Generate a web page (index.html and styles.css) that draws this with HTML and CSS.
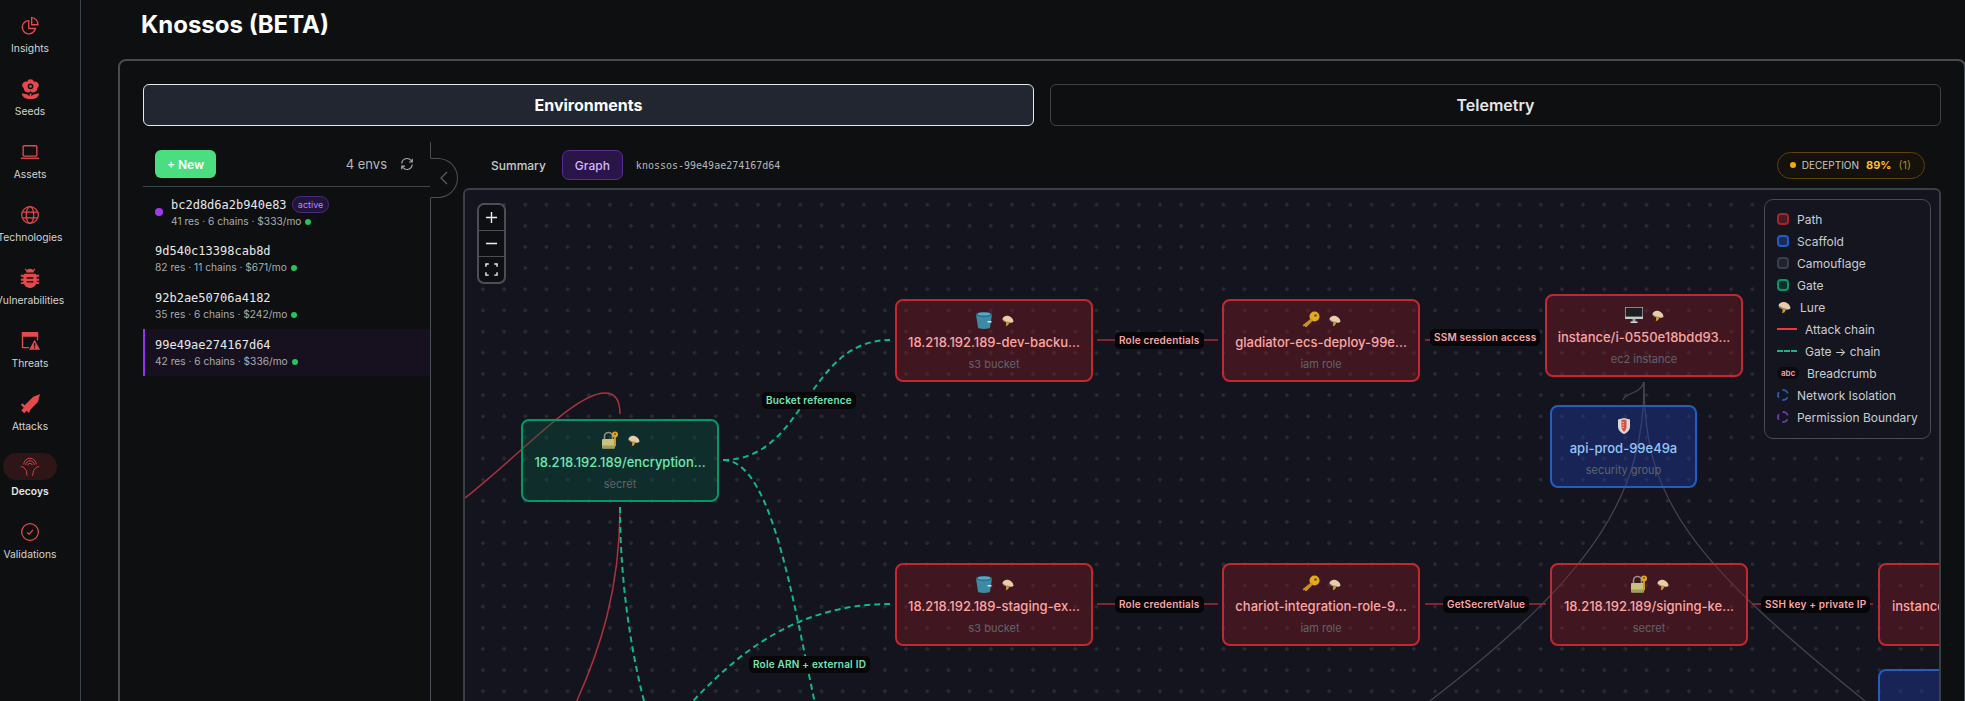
FILE: index.html
```html
<!DOCTYPE html>
<html lang="en">
<head>
    <meta charset="UTF-8">
    <meta name="viewport" content="width=device-width, initial-scale=1.0">
    <title>Knossos (BETA)</title>
    <link rel="stylesheet" href="styles.css">
</head>
<body>

<svg class="defs" width="0" height="0" aria-hidden="true">
    <symbol id="e-lure" viewBox="0 0 14 14">
        <path d="M1.500 5.500C2 3 5 1.500 7.500 2c3 .5 5.500 3 6 6-.2 1-2 1.500-4 1.500-3 0-7-.8-8-4z" fill="#e8cdaa"/>
        <path d="M2 6.500c1.500 1.500 4 2.500 7.500 2.800" fill="none" stroke="#8b7a68" stroke-width="1.200"/>
        <path d="M5.500 9l3.500 .5-1.500 2.700-2.500 1 .5-1.700z" fill="#dd9d1c"/>
    </symbol>
    <symbol id="e-lock" viewBox="0 0 18 18">
        <path d="M3.500 8V5.500a4 4 0 0 1 8 0V8" fill="none" stroke="#8f8f88" stroke-width="1.600"/>
        <rect x="1" y="8" width="13" height="9.500" rx="1" fill="#c9c27c"/>
        <rect x="1" y="14.500" width="13" height="3" rx="1" fill="#a09a5c"/>
        <circle cx="14" cy="3.500" r="3" fill="#e0a526"/>
        <circle cx="14" cy="3" r=".9" fill="#6b4c10"/>
        <path d="M13 6h2v8.500l-1 1.200-1-1.200z" fill="#d2951e"/>
    </symbol>
    <symbol id="e-bucket" viewBox="0 0 18 18">
        <path d="M1 3.500h16l-2 13c-.3 1-2.800 1.400-6 1.400s-5.700-.4-6-1.400z" fill="#3d8aa6"/>
        <ellipse cx="9" cy="3.500" rx="8" ry="2.500" fill="#2c6a82"/>
        <ellipse cx="9" cy="3" rx="6.500" ry="1.600" fill="#59a8c4"/>
        <rect x="12.500" y="10" width="4" height="1.500" fill="#cfe3ea"/>
    </symbol>
    <symbol id="e-key" viewBox="0 0 18 18">
        <circle cx="12.500" cy="5.500" r="5" fill="#e3ab1f"/>
        <circle cx="13.500" cy="4.500" r="1.300" fill="#6e4e0a"/>
        <path d="M9 7.500l2 2L4.500 16l-1 .3-.7-1.300-1.500 .5L.8 14z" fill="#c9921a"/>
    </symbol>
    <symbol id="e-monitor" viewBox="1 1 18 16">
        <rect x="1" y="1" width="18" height="12" fill="#c6c9cc"/>
        <rect x="1.600" y="1.600" width="16.800" height="9" fill="#1d1e21"/>
        <rect x="8.500" y="13" width="3" height="3" fill="#9a9da1"/>
        <rect x="6.500" y="15.500" width="7" height="1.500" fill="#d6d8da"/>
    </symbol>
    <symbol id="e-shield" viewBox="0 0 14 18">
        <path d="M7 1l6 1.500v7c0 3.500-3 6.500-6 7.500-3-1-6-4-6-7.500v-7z" fill="#d9d9d6"/>
        <path d="M7 2.500l2.500 .6v7c0 2-1.300 3.800-2.500 4.900-1.200-1.100-2.500-2.900-2.500-4.900v-7z" fill="#d8503f"/>
        <path d="M5.500 5.500h1.200M5.500 8h1.200M5.500 10.500h1.200" stroke="#f2ded8" stroke-width="1"/>
    </symbol>
</svg>

<aside class="sidebar">
    <a class="nav-item">
        <span class="nav-icon">
            <svg viewBox="0 0 24 24" fill="none" stroke="currentColor" stroke-width="1.600"><path d="M10.500 5.500a8 8 0 1 0 8 9.500h-8z"/><path d="M14 2.500a8 8 0 0 1 7.500 8.500H14z" transform="translate(0 -.5)"/></svg>
        </span>
        <span class="nav-label">Insights</span>
    </a>
    <a class="nav-item">
        <span class="nav-icon">
            <svg class="tall" viewBox="0 0 24 24" fill="currentColor"><path d="M12 1a4.200 4.200 0 0 1 4 2.700 4.400 4.400 0 0 1 4.800 1.800 4.200 4.200 0 0 1-1.200 5.600 4.300 4.300 0 0 1-4 4.900 4.300 4.300 0 0 1-3.600-1.400 4.300 4.300 0 0 1-3.600 1.400 4.300 4.300 0 0 1-4-4.900A4.200 4.200 0 0 1 3.200 5.500 4.400 4.400 0 0 1 8 3.700 4.200 4.200 0 0 1 12 1z"/><circle cx="12" cy="9" r="3.200" fill="#0e0f10"/><circle cx="12" cy="9" r="1.500"/><path d="M2 17c4 0 8 1.200 9 3.500V17h2v3.500c1-2.300 5-3.500 9-3.500-.5 4-4 6.500-10 6.500S2.500 21 2 17z"/></svg>
        </span>
        <span class="nav-label">Seeds</span>
    </a>
    <a class="nav-item">
        <span class="nav-icon">
            <svg viewBox="0 0 24 24" fill="none" stroke="currentColor" stroke-width="1.600"><rect x="3.800" y="4.500" width="16.400" height="12.500" rx="1"/><path d="M1 19.500h22"/></svg>
        </span>
        <span class="nav-label">Assets</span>
    </a>
    <a class="nav-item">
        <span class="nav-icon">
            <svg viewBox="0 0 24 24" fill="none" stroke="currentColor" stroke-width="1.500"><circle cx="12" cy="12" r="10"/><ellipse cx="12" cy="12" rx="4.500" ry="10"/><path d="M2.800 8.500h18.400M2.800 15.500h18.400"/></svg>
        </span>
        <span class="nav-label">Technologies</span>
    </a>
    <a class="nav-item">
        <span class="nav-icon">
            <svg viewBox="0 0 24 24" fill="currentColor"><path d="M7.500 5.500a4.500 4.500 0 0 1 9 0z"/><path d="M6 1l3 3M18 1l-3 3" stroke="currentColor" stroke-width="1.500"/><path d="M6 7h12a2 2 0 0 1 1.500 1.200H23v2.300h-3V13h3v2.300h-3V17h3v2.300h-3.800A7.500 7.500 0 0 1 12 24a7.500 7.500 0 0 1-7.200-4.700H1V17h3v-1.700H1V13h3v-2.500H1V8.200h3.500A2 2 0 0 1 6 7z"/><path d="M8 12h8M8 16.500h8" stroke="#0e0f10" stroke-width="2"/></svg>
        </span>
        <span class="nav-label">Vulnerabilities</span>
    </a>
    <a class="nav-item">
        <span class="nav-icon">
            <svg viewBox="0 0 24 24" fill="none" stroke="currentColor" stroke-width="1.600"><path d="M11 20H3V2.500h18V11"/><path d="M3 2h18v4H3z" fill="currentColor"/><path d="M17.500 10.500 24 22.500H11z" fill="currentColor" stroke="none"/><path d="M17.500 14.500v4M17.500 19.500v1.500" stroke="#0e0f10" stroke-width="1.500"/></svg>
        </span>
        <span class="nav-label">Threats</span>
    </a>
    <a class="nav-item">
        <span class="nav-icon">
            <svg viewBox="0 0 24 24" fill="currentColor"><path d="M24 0 21.500 9.500 11 20 5 14 15.500 3.500z"/><path d="M3.500 11.500l9.500 9.500-2 2-2.500-2.500-3 3L2 20l3-3-3.500-3.500z" transform="translate(-.5 -.5)"/></svg>
        </span>
        <span class="nav-label">Attacks</span>
    </a>
    <a class="nav-item active">
        <span class="nav-icon">
            <svg viewBox="0 0 24 24" fill="none" stroke="currentColor" stroke-width="1.200"><path d="M4.500 9a7.500 7.500 0 0 1 15 0"/><path d="M7 9.500a5 5 0 0 1 10 0"/><path d="M9.500 10a2.500 2.500 0 0 1 5 0"/><path d="M1 11.500l3 .5 3.500 4 1 6.500M23 11.500l-3 .5-3.500 4-1.500 6.500"/></svg>
        </span>
        <span class="nav-label">Decoys</span>
    </a>
    <a class="nav-item">
        <span class="nav-icon">
            <svg viewBox="0 0 24 24" fill="none" stroke="currentColor" stroke-width="1.500"><circle cx="12" cy="12" r="10"/><path d="M8.500 12.500l2.500 2 4.500-5"/></svg>
        </span>
        <span class="nav-label">Validations</span>
    </a>
</aside>

<main class="main">
    <h1 class="page-title">Knossos (BETA)</h1>

    <section class="panel">
        <div class="tabs">
            <button class="tab active">Environments</button>
            <button class="tab">Telemetry</button>
        </div>

        <div class="workspace">
            <div class="env-list">
                <div class="env-head">
                    <button class="btn-new">+ New</button>
                    <span class="env-count">4 envs</span>
                    <svg class="refresh" viewBox="0 0 24 24" fill="none" stroke="currentColor" stroke-width="2"><path d="M3 11a9 9 0 0 1 16-5l2 2.500M21 3v5.500h-5.500M21 13a9 9 0 0 1-16 5l-2-2.500M3 21v-5.500h5.500"/></svg>
                </div>
                <div class="env-row current">
                    <span class="env-dot"></span>
                    <div>
                        <div class="env-name">bc2d8d6a2b940e83 <span class="badge-active">active</span></div>
                        <div class="env-meta">41 res · 6 chains · $333/mo <span class="ok-dot"></span></div>
                    </div>
                </div>
                <div class="env-row">
                    <div>
                        <div class="env-name">9d540c13398cab8d</div>
                        <div class="env-meta">82 res · 11 chains · $671/mo <span class="ok-dot"></span></div>
                    </div>
                </div>
                <div class="env-row">
                    <div>
                        <div class="env-name">92b2ae50706a4182</div>
                        <div class="env-meta">35 res · 6 chains · $242/mo <span class="ok-dot"></span></div>
                    </div>
                </div>
                <div class="env-row selected">
                    <div>
                        <div class="env-name">99e49ae274167d64</div>
                        <div class="env-meta">42 res · 6 chains · $336/mo <span class="ok-dot"></span></div>
                    </div>
                </div>
                <div class="collapse">
                    <svg viewBox="0 0 8 14" fill="none" stroke="currentColor" stroke-width="1.200"><path d="M7 1 1 7l6 6"/></svg>
                </div>
            </div>

            <div class="graph-col">
                <div class="graph-head">
                    <button class="view-btn">Summary</button>
                    <button class="view-btn active">Graph</button>
                    <span class="stack-id">knossos-99e49ae274167d64</span>
                    <div class="deception">
                        <span class="dec-dot"></span>
                        <span class="dec-word">DECEPTION</span>
                        <b class="dec-pct">89%</b>
                        <span class="dec-count">(1)</span>
                    </div>
                </div>

                <div class="canvas">
                    <!-- viewBox uses page coordinates, easier to line up with the nodes -->
                    <svg class="edges" viewBox="465 190 1474 511" fill="none">
                        <g class="edge-gray">
                            <path d="M1644 382C1640 395 1625 392 1623 400"/>
                            <path d="M1644 382C1644 490 1600 570 1430 701"/>
                            <path d="M1644 382C1644 500 1690 560 1870 705"/>
                        </g>
                        <g class="edge-red-thin">
                            <path d="M620 414C620 400 615 393 605 393C575 393 520 455 465 498"/>
                            <path d="M620 507C620 590 600 650 575 705"/>
                        </g>
                        <g class="edge-green">
                            <path d="M723 460C806 460 806 340 890 340"/>
                            <path d="M723 460C807 460 807 870 891 870"/>
                            <path d="M620 507C620 570 628 640 645 705"/>
                            <path d="M680 715C730 660 790 604 890 604"/>
                        </g>
                        <g class="edge-red">
                            <path d="M1097 340H1218"/>
                            <path d="M1425 340C1482 340 1482 336 1540 336"/>
                            <path d="M1097 604H1218"/>
                            <path d="M1425 604H1546"/>
                            <path d="M1752 604H1873"/>
                        </g>
                    </svg>

                    <div class="zoom-ctl">
                        <button><svg viewBox="0 0 14 14" stroke="currentColor" stroke-width="1.500"><path d="M7 1v12M1 7h12"/></svg></button>
                        <button><svg viewBox="0 0 14 14" stroke="currentColor" stroke-width="1.500"><path d="M1 7h12"/></svg></button>
                        <button><svg viewBox="0 0 14 14" fill="none" stroke="currentColor" stroke-width="1.500"><path d="M1 4V1h3M10 1h3v3M13 10v3h-3M4 13H1v-3"/></svg></button>
                    </div>

                    <div class="node gate n-encrypt">
                        <div class="node-icons"><svg class="ico"><use href="#e-lock"/></svg><svg class="ico-lure"><use href="#e-lure"/></svg></div>
                        <div class="node-name">18.218.192.189/encryption...</div>
                        <div class="node-type">secret</div>
                    </div>
                    <div class="node path n-backup">
                        <div class="node-icons"><svg class="ico"><use href="#e-bucket"/></svg><svg class="ico-lure"><use href="#e-lure"/></svg></div>
                        <div class="node-name">18.218.192.189-dev-backu...</div>
                        <div class="node-type">s3 bucket</div>
                    </div>
                    <div class="node path n-gladiator">
                        <div class="node-icons"><svg class="ico"><use href="#e-key"/></svg><svg class="ico-lure"><use href="#e-lure"/></svg></div>
                        <div class="node-name">gladiator-ecs-deploy-99e...</div>
                        <div class="node-type">iam role</div>
                    </div>
                    <div class="node path n-instance">
                        <div class="node-icons"><svg class="ico"><use href="#e-monitor"/></svg><svg class="ico-lure"><use href="#e-lure"/></svg></div>
                        <div class="node-name">instance/i-0550e18bdd93...</div>
                        <div class="node-type">ec2 instance</div>
                    </div>
                    <div class="node scaffold n-api">
                        <div class="node-icons"><svg class="ico"><use href="#e-shield"/></svg></div>
                        <div class="node-name">api-prod-99e49a</div>
                        <div class="node-type">security group</div>
                    </div>
                    <div class="node path n-staging">
                        <div class="node-icons"><svg class="ico"><use href="#e-bucket"/></svg><svg class="ico-lure"><use href="#e-lure"/></svg></div>
                        <div class="node-name">18.218.192.189-staging-ex...</div>
                        <div class="node-type">s3 bucket</div>
                    </div>
                    <div class="node path n-chariot">
                        <div class="node-icons"><svg class="ico"><use href="#e-key"/></svg><svg class="ico-lure"><use href="#e-lure"/></svg></div>
                        <div class="node-name">chariot-integration-role-9...</div>
                        <div class="node-type">iam role</div>
                    </div>
                    <div class="node path n-signing">
                        <div class="node-icons"><svg class="ico"><use href="#e-lock"/></svg><svg class="ico-lure"><use href="#e-lure"/></svg></div>
                        <div class="node-name">18.218.192.189/signing-ke...</div>
                        <div class="node-type">secret</div>
                    </div>
                    <div class="node path n-instance2">
                        <div class="node-name n-cut">instance</div>
                    </div>
                    <div class="node scaffold n-api2"></div>

                    <span class="edge-label green l-bucket">Bucket reference</span>
                    <span class="edge-label green l-arn">Role ARN + external ID</span>
                    <span class="edge-label red l-role1">Role credentials</span>
                    <span class="edge-label red l-ssm">SSM session access</span>
                    <span class="edge-label red l-role2">Role credentials</span>
                    <span class="edge-label red l-secret">GetSecretValue</span>
                    <span class="edge-label red l-ssh">SSH key + private IP</span>

                    <div class="legend">
                        <div class="legend-row"><span class="sw sw-path"></span>Path</div>
                        <div class="legend-row"><span class="sw sw-scaffold"></span>Scaffold</div>
                        <div class="legend-row"><span class="sw sw-camo"></span>Camouflage</div>
                        <div class="legend-row"><span class="sw sw-gate"></span>Gate</div>
                        <div class="legend-row wide"><svg class="sw-lure"><use href="#e-lure"/></svg>Lure</div>
                        <div class="legend-row wider"><span class="ln ln-attack"></span>Attack chain</div>
                        <div class="legend-row wider"><span class="ln ln-gate"></span>Gate → chain</div>
                        <div class="legend-row wider"><span class="sw-abc">abc</span>Breadcrumb</div>
                        <div class="legend-row"><span class="sw-ring ring-net"></span>Network Isolation</div>
                        <div class="legend-row"><span class="sw-ring ring-perm"></span>Permission Boundary</div>
                    </div>
                </div>
            </div>
        </div>
    </section>
</main>

</body>
</html>
```

FILE: styles.css
```css
* {
    box-sizing: border-box;
}

html, body {
    height: 100%;
    overflow: hidden;
}

body {
    margin: 0;
    display: flex;
    background: #0e0f10;
    color: #e5e7eb;
    font-family: Inter, "Liberation Sans", sans-serif;
}

button {
    font-family: inherit;
    cursor: pointer;
}

.defs {
    position: absolute;
}

/* sidebar */
.sidebar {
    width: 81px;
    flex: none;
    padding-top: 12px;
    border-right: 1px solid #3d444b;
}

.nav-item {
    width: 60px;
    height: 63px;
    display: flex;
    flex-direction: column;
    align-items: center;
    color: #e5484d;
}

.nav-icon {
    height: 27px;
    display: flex;
    align-items: center;
    justify-content: center;
    flex: none;
}

.nav-icon svg {
    width: 20px;
    height: 20px;
    flex: none;
}

.nav-icon svg.tall {
    width: 21px;
    height: 24px;
}

.nav-label {
    margin-top: 2px;
    font-size: 10.300px;
    line-height: 14px;
    color: #d4d4d4;
    white-space: nowrap;
}

.nav-item.active {
    height: 65px;
}

.nav-item.active .nav-icon {
    width: 54px;
    border-radius: 14px;
    background: #2d1518;
}

.nav-item.active .nav-icon svg {
    color: #c9424a;
}

.nav-item.active .nav-label {
    margin-top: 4px;
    font-weight: 600;
    color: #e5e5e5;
}

/* main */
.main {
    flex: 1;
    min-width: 0;
    padding-left: 37px;
}

.page-title {
    margin: 9px 0 18px;
    padding-left: 23px;
    font-size: 24px;
    line-height: 32px;
    font-weight: 700;
    color: #fff;
}

.panel {
    width: 1848px;
    height: 700px;
    padding: 23px;
    border: 2px solid #464c52;
    border-radius: 8px;
}

.tabs {
    display: grid;
    grid-template-columns: 1fr 1fr;
    gap: 16px;
}

.tab {
    height: 42px;
    background: transparent;
    border: 1px solid #3d4349;
    border-radius: 6px;
    color: #e5e7eb;
    font-size: 16px;
    font-weight: 600;
}

.tab.active {
    background: #212630;
    border-color: #e8e8e8;
    color: #fff;
    font-weight: 700;
}

.workspace {
    display: flex;
    margin-top: 16px;
    height: 600px;
}

/* env list */
.env-list {
    position: relative;
    width: 288px;
    flex: none;
    border-right: 1px solid #4a5056;
}

.env-head {
    height: 45px;
    margin-bottom: 1px;
    display: flex;
    align-items: center;
    padding: 0 16px 0 12px;
    border-bottom: 1px solid #3f464b;
}

.btn-new {
    height: 28px;
    width: 61px;
    padding: 0;
    border: none;
    border-radius: 6px;
    background: #4ade80;
    color: #fff;
    font-size: 12px;
    font-weight: 600;
}

.env-count {
    margin-left: auto;
    font-size: 13px;
    color: #b4b8bd;
}

.refresh {
    width: 14px;
    height: 14px;
    margin-left: 13px;
    color: #a6aaae;
}

.env-row {
    height: 47px;
    display: flex;
    align-items: center;
    gap: 8px;
    padding-left: 12px;
}

.env-dot {
    width: 8px;
    height: 8px;
    flex: none;
    border-radius: 50%;
    background: #a03af0;
}

.env-name {
    font-family: "DejaVu Sans Mono", monospace;
    font-size: 12px;
    line-height: 16px;
    color: #e8e8e8;
}

.badge-active {
    display: inline-block;
    margin-left: -2px;
    padding: 0 5px;
    border: 1px solid #4c2a80;
    border-radius: 9px;
    background: #22133a;
    color: #c084fc;
    font-family: Inter, sans-serif;
    font-size: 9px;
    line-height: 15px;
    vertical-align: 1px;
}

.env-meta {
    margin-top: 1px;
    font-size: 10.200px;
    line-height: 14px;
    color: #a8acb0;
}

.ok-dot {
    display: inline-block;
    width: 6px;
    height: 6px;
    margin-left: 1px;
    border-radius: 50%;
    background: #22c55e;
}

.env-row.selected {
    padding-left: 10px;
    border-left: 2px solid #9333ea;
    background: #17111f;
}

.collapse {
    position: absolute;
    top: 16px;
    right: -28px;
    width: 28px;
    height: 40px;
    padding-left: 9px;
    display: flex;
    align-items: center;
    border: 1px solid #4a5056;
    border-left: 1px solid #0e0f10;
    border-radius: 0 20px 20px 0;
    background: #0e0f10;
    color: #596067;
}

.collapse svg {
    width: 8px;
    height: 14px;
}

/* graph */
.graph-col {
    flex: 1;
    min-width: 0;
    padding-left: 32px;
    display: flex;
    flex-direction: column;
}

.graph-head {
    height: 46px;
    flex: none;
    display: flex;
    align-items: center;
    gap: 3px;
}

.view-btn {
    height: 30px;
    padding: 0 12px;
    background: transparent;
    border: 1px solid transparent;
    border-radius: 7px;
    color: #c8cacc;
    font-size: 12px;
    font-weight: 500;
}

.view-btn:first-child {
    padding-left: 27px;
}

.view-btn.active {
    background: #2a1548;
    border-color: #5b2a9a;
    color: #d8b4fe;
}

.stack-id {
    margin-left: 10px;
    font-family: "DejaVu Sans Mono", monospace;
    font-size: 10px;
    color: #b4b8bc;
}

.deception {
    margin-left: auto;
    margin-right: 16px;
    height: 27px;
    display: flex;
    align-items: center;
    padding: 0 13px 0 12px;
    border: 1px solid #5f4208;
    border-radius: 14px;
    background: #15120b;
    font-size: 10px;
}

.dec-dot {
    width: 6px;
    height: 6px;
    margin-right: 6px;
    border-radius: 50%;
    background: #f5a70b;
}

.dec-word {
    color: #c9c9c4;
}

.dec-pct {
    margin-left: 7px;
    font-size: 11px;
    color: #fbbf24;
}

.dec-count {
    margin-left: 7px;
    font-size: 11px;
    color: #a6841e;
}

.canvas {
    position: relative;
    flex: 1;
    overflow: hidden;
    border: 2px solid #3a3f44;
    border-radius: 6px;
    background-color: #14141e;
    background-image: radial-gradient(circle, #282a34 1.500px, transparent 1.800px);
    background-size: 21.170px 21.170px;
    background-position: 7.400px 4.100px;
}

.edges {
    position: absolute;
    left: 0;
    top: 0;
    width: 1474px;
    height: 511px;
}

.edge-gray path {
    stroke: #44454e;
    stroke-width: 1.200;
}

.edge-red-thin path {
    stroke: #a8333d;
    stroke-width: 1.500;
}

.edge-green path {
    stroke: #10b981;
    stroke-width: 2;
    stroke-dasharray: 6 4;
}

.edge-red path {
    stroke: #a62c35;
    stroke-width: 1.500;
}

.zoom-ctl {
    position: absolute;
    left: 12px;
    top: 13px;
    width: 29px;
    display: flex;
    flex-direction: column;
    border: 2px solid #4b4f55;
    border-radius: 7px;
    background: #0e0f12;
    overflow: hidden;
}

.zoom-ctl button {
    height: 26px;
    display: flex;
    align-items: center;
    justify-content: center;
    padding: 0;
    background: none;
    border: none;
    border-bottom: 1px solid #4b4f55;
    color: #f0f0f0;
}

.zoom-ctl button:last-child {
    height: 25px;
    border-bottom: none;
}

.zoom-ctl svg {
    width: 13px;
    height: 13px;
}

/* nodes, placed on the canvas */
.node {
    position: absolute;
    width: 198px;
    height: 83px;
    padding-top: 9px;
    border: 2px solid;
    border-radius: 8px;
    text-align: center;
}

.node-icons {
    height: 20px;
    display: flex;
    justify-content: center;
    align-items: center;
    gap: 8px;
}

.ico {
    width: 18px;
    height: 18px;
}

.ico-lure {
    width: 13px;
    height: 13px;
}

.node-name {
    margin-top: 3px;
    font-size: 13px;
    line-height: 18px;
    font-weight: 500;
    white-space: nowrap;
}

.node-name.n-cut {
    margin-top: 23px;
    padding-left: 12px;
    text-align: left;
}

.node-type {
    margin-top: 6px;
    font-size: 11px;
    line-height: 14px;
    color: #62626c;
}

.node.path {
    background: rgba(127, 29, 35, .42);
    border-color: #c2282f;
}

.node.path .node-name {
    color: #fca5a5;
}

.node.gate {
    background: rgba(6, 95, 70, .35);
    border-color: #079669;
}

.node.gate .node-name {
    color: #6ee7b7;
}

.node.scaffold {
    background: rgba(30, 64, 175, .38);
    border-color: #1f5fc4;
}

.node.scaffold .node-name {
    color: #93c5fd;
}

.n-encrypt { left: 56px; top: 229px; }
.n-backup { left: 430px; top: 109px; }
.n-gladiator { left: 757px; top: 109px; }
.n-instance { left: 1080px; top: 104px; }
.n-api { left: 1085px; top: 215px; width: 147px; }
.n-staging { left: 430px; top: 373px; }
.n-chariot { left: 757px; top: 373px; }
.n-signing { left: 1085px; top: 373px; }
.n-instance2 { left: 1413px; top: 373px; }
.n-api2 { left: 1413px; top: 479px; }

.edge-label {
    position: absolute;
    height: 17px;
    padding: 0 4px;
    border-radius: 5px;
    background: #060608;
    font-size: 10px;
    line-height: 17px;
    font-weight: 600;
    letter-spacing: .2px;
    white-space: nowrap;
}

.edge-label.green {
    color: #6ee7b7;
}

.edge-label.red {
    color: #fca5a5;
}

.l-bucket { left: 297px; top: 202px; }
.l-arn { left: 284px; top: 466px; }
.l-role1 { left: 650px; top: 142px; }
.l-ssm { left: 965px; top: 139px; }
.l-role2 { left: 650px; top: 406px; }
.l-secret { left: 978px; top: 406px; }
.l-ssh { left: 1296px; top: 406px; }

/* legend */
.legend {
    position: absolute;
    left: 1299px;
    top: 9px;
    width: 167px;
    height: 240px;
    padding: 8px 12px;
    border: 1px solid #474b55;
    border-radius: 9px;
    background: #14151f;
}

.legend-row {
    height: 22px;
    display: flex;
    align-items: center;
    gap: 8px;
    font-size: 12px;
    color: #c9cdd2;
    white-space: nowrap;
}

.legend-row.wide {
    gap: 9px;
}

.sw {
    width: 12px;
    height: 12px;
    flex: none;
    border: 2px solid;
    border-radius: 4px;
}

.sw-path { border-color: #a3262f; background: #4a1a22; }
.sw-scaffold { border-color: #1f5fc4; background: #1b2a5a; }
.sw-camo { border-color: #3a3f4d; background: #20222e; }
.sw-gate { border-color: #079669; background: #0f2f2e; }

.sw-lure {
    width: 14px;
    height: 14px;
    flex: none;
}

.ln {
    width: 20px;
    height: 0;
    flex: none;
}

.ln-attack {
    border-top: 2px solid #e63946;
}

.ln-gate {
    border-top: 2px dashed #10b981;
}

.sw-abc {
    width: 22px;
    height: 12px;
    flex: none;
    border-radius: 6px;
    background: #0a0a10;
    color: #fca5a5;
    font-size: 8px;
    font-weight: 600;
    line-height: 12px;
    text-align: center;
}

.sw-ring {
    width: 12px;
    height: 12px;
    flex: none;
    border: 2px dashed;
    border-radius: 50%;
}

.ring-net { border-color: #2b5aa8; }
.ring-perm { border-color: #6b3aa8; }
```
